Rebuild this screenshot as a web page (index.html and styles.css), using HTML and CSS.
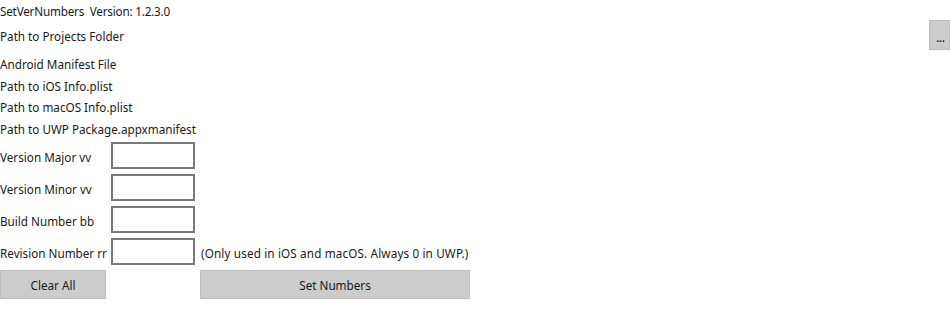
FILE: index.html
```html
<!DOCTYPE html>
<html>
<head>
<meta charset="utf-8">
<link rel="stylesheet" href="styles.css">
</head>
<body>
<div class="app">
  <div class="title-row"><span class="label title">SetVerNumbers&nbsp; Version: 1.2.3.0</span></div>
  <div class="folder-row">
    <span class="label">Path to Projects Folder</span>
    <button class="btn browse">...</button>
  </div>
  <div class="path-row first"><span class="label">Android Manifest File</span></div>
  <div class="path-row"><span class="label">Path to iOS Info.plist</span></div>
  <div class="path-row"><span class="label">Path to macOS Info.plist</span></div>
  <div class="path-row"><span class="label">Path to UWP Package.appxmanifest</span></div>
  <div class="num-grid">
    <span class="label">Version Major vv</span><input class="box" type="text"><span></span>
    <span class="label">Version Minor vv</span><input class="box" type="text"><span></span>
    <span class="label">Build Number bb</span><input class="box" type="text"><span></span>
    <span class="label">Revision Number rr</span><input class="box" type="text"><span class="label note">(Only used in iOS and macOS. Always 0 in UWP.)</span>
  </div>
  <div class="btn-row">
    <button class="btn clear">Clear All</button>
    <button class="btn set">Set Numbers</button>
  </div>
</div>
</body>
</html>
```
FILE: styles.css
```css
html, body {
  margin: 0;
  padding: 0;
  background: #ffffff;
}
.app {
  width: 950px;
  height: 313px;
  overflow: hidden;
  font-family: "Noto Sans", "Open Sans", sans-serif;
  font-size: 11.7px;
  color: #1a1a1a;
  display: flex;
  flex-direction: column;
}
.label {
  white-space: nowrap;
  line-height: 16px;
  padding-top: 1px;
}
.title {
  letter-spacing: -0.2px;
}
.title-row {
  height: 20px;
  display: flex;
  align-items: center;
}
.folder-row {
  height: 30px;
  display: flex;
  align-items: center;
  justify-content: space-between;
}
.path-row {
  height: 21.6px;
  display: flex;
  align-items: center;
}
.path-row.first {
  margin-top: 3px;
}
.num-grid {
  margin-top: 1px;
  display: grid;
  grid-template-columns: 111px 84px 1fr;
  grid-auto-rows: 32px;
  align-items: center;
}
.box {
  box-sizing: border-box;
  width: 84px;
  height: 27px;
  margin: 0;
  align-self: start;
  margin-top: 2px;
  border: 2px solid #7a7a7a;
  background: #ffffff;
  padding: 0 6px;
  font: inherit;
}
.note {
  padding-left: 6px;
  letter-spacing: 0.15px;
}
.btn {
  box-sizing: border-box;
  margin: 0;
  background: #cccccc;
  border: 1px solid #bdbdbd;
  font: inherit;
  color: #1a1a1a;
  padding: 0;
}
.browse {
  width: 21px;
  height: 30px;
  font-size: 10px;
  font-weight: bold;
  line-height: 1;
  padding-top: 5px;
  padding-left: 2px;
}
.btn-row {
  margin-top: 2px;
  height: 29px;
  display: flex;
}
.clear {
  width: 106px;
  height: 29px;
}
.set {
  margin-left: 94px;
  width: 270px;
  height: 29px;
}
```
